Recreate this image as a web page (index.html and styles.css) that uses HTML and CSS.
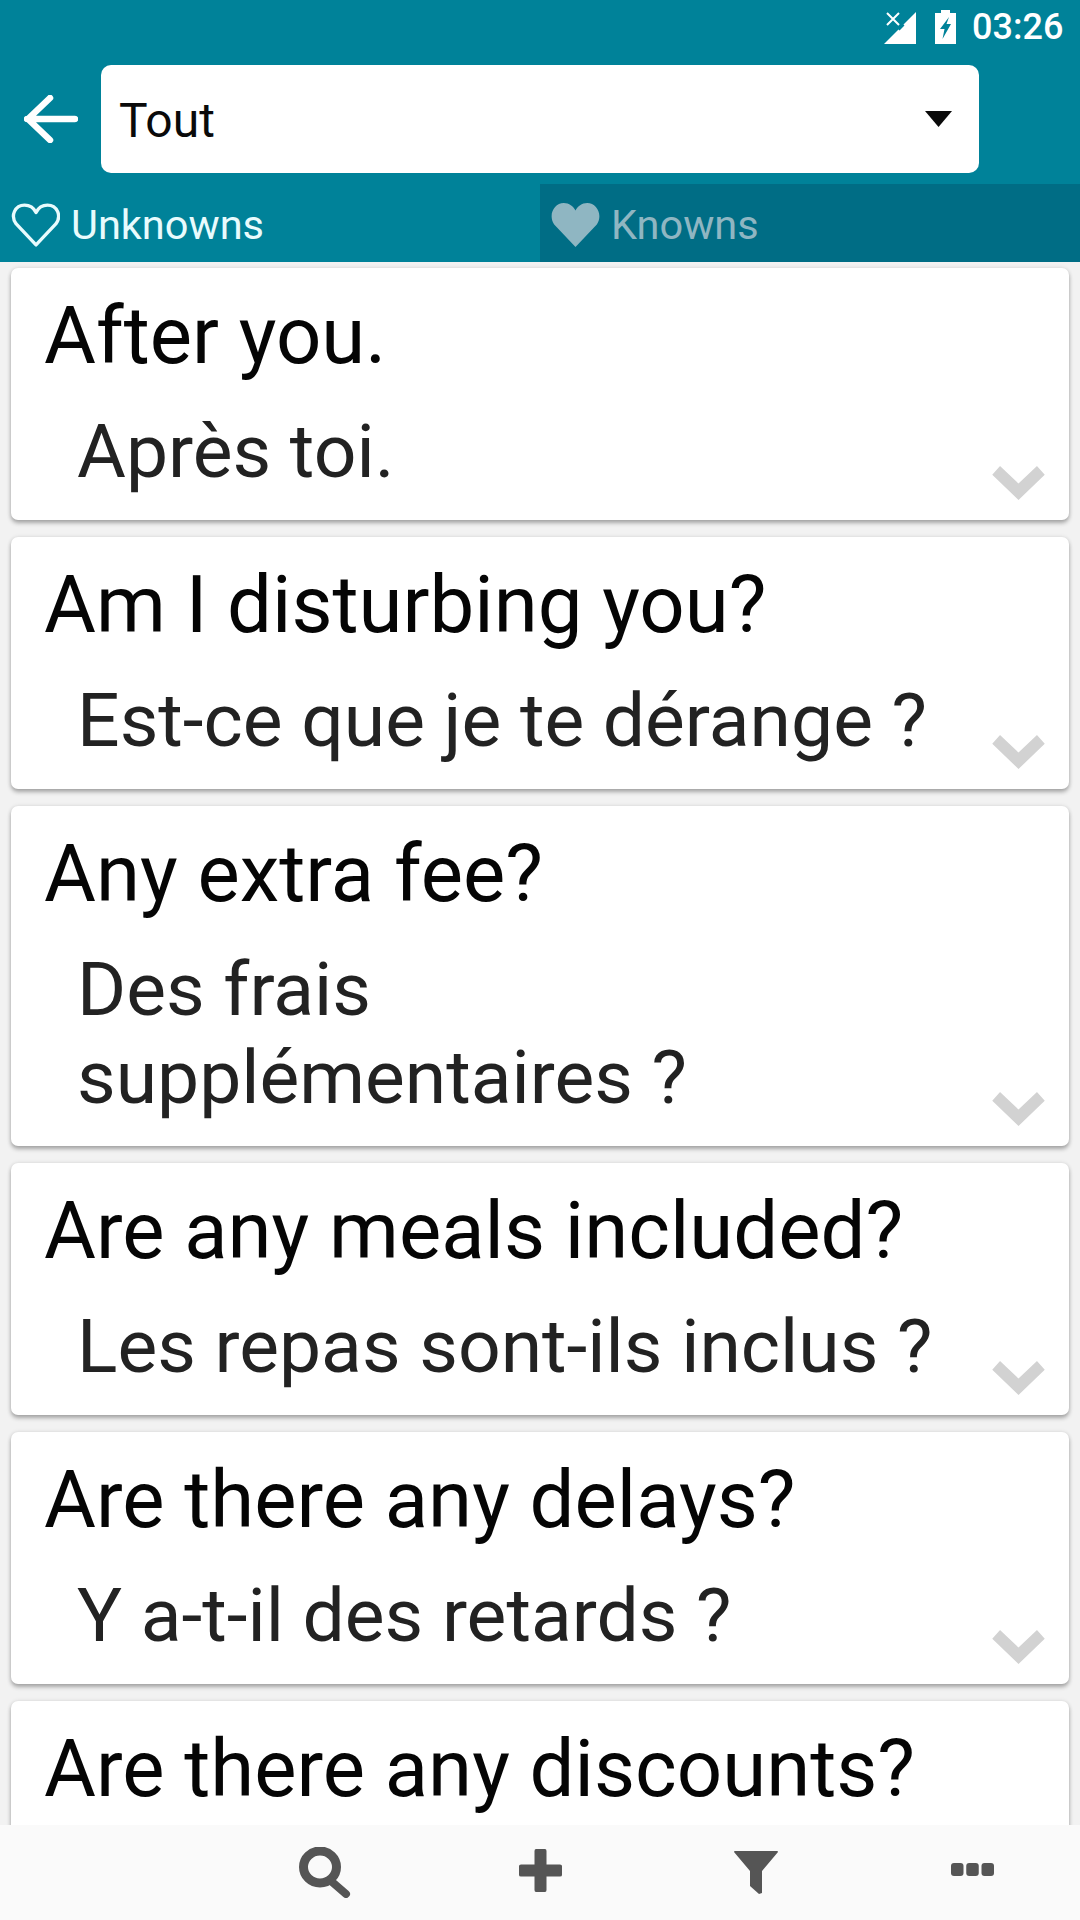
FILE: index.html
```html
<!DOCTYPE html>
<html lang="fr">
<head>
<meta charset="utf-8">
<title>Phrases</title>
<link rel="stylesheet" href="styles.css">
</head>
<body>
<div class="app">
  <header class="header">
    <div class="status">
      <svg class="ico-signal" viewBox="0 0 32 32"><path d="M32 0V32H0Z" fill="#fff"/><path d="M0 -2L18 16M18 -2L0 16" stroke="#008299" stroke-width="7"/><path d="M3 1L15 13M15 1L3 13" stroke="#fff" stroke-width="2"/></svg>
      <svg class="ico-batt" viewBox="0 0 21 34"><path d="M6 0H15V3H21V34H0V3H6Z" fill="#fff"/><path d="M14 7L5 19H9.5L7.5 29L16 14H11.5Z" fill="#008299"/></svg>
      <span class="clock">03:26</span>
    </div>
    <div class="toolbar">
      <svg class="ico-back" viewBox="0 0 54 48"><path d="M3 24H51M26 3L4 24L26 45" fill="none" stroke="#fff" stroke-width="6.5" stroke-linecap="round" stroke-linejoin="round"/></svg>
      <div class="select"><span>Tout</span><svg class="ico-caret" viewBox="0 0 27 16"><path d="M0 0H27L13.5 16Z" fill="#0a0a0a"/></svg></div>
    </div>
    <div class="tabs">
      <div class="tab"><svg class="ico-heart" viewBox="0 1 47 42" preserveAspectRatio="none"><path d="M24 41L5 21C-1 13 4 3 13 3C18 3 22 6 24 10C26 6 30 3 35 3C44 3 49 13 43 21Z" fill="none" stroke="#e8fbfd" stroke-width="3.2" stroke-linejoin="round"/></svg><span>Unknowns</span></div>
      <div class="tab tab-off"><svg class="ico-heart" viewBox="1 2 46 41" preserveAspectRatio="none"><path d="M24 43L4 22C-2 13 4 2 13 2C18 2 22 5 24 9C26 5 30 2 35 2C44 2 50 13 44 22Z" fill="#8fb6c2"/></svg><span>Knowns</span></div>
    </div>
  </header>
  <main class="list">
    <article class="card"><h2>After you.</h2><p>Après toi.</p><svg class="chev" viewBox="0 0 54 36"><path d="M0 9L8 0L27 18L46 0L54 9L27 35Z" fill="#d2d2d2"/></svg></article>
    <article class="card"><h2>Am I disturbing you?</h2><p>Est-ce que je te dérange ?</p><svg class="chev" viewBox="0 0 54 36"><path d="M0 9L8 0L27 18L46 0L54 9L27 35Z" fill="#d2d2d2"/></svg></article>
    <article class="card"><h2>Any extra fee?</h2><p>Des frais<br>supplémentaires ?</p><svg class="chev" viewBox="0 0 54 36"><path d="M0 9L8 0L27 18L46 0L54 9L27 35Z" fill="#d2d2d2"/></svg></article>
    <article class="card"><h2>Are any meals included?</h2><p>Les repas sont-ils inclus ?</p><svg class="chev" viewBox="0 0 54 36"><path d="M0 9L8 0L27 18L46 0L54 9L27 35Z" fill="#d2d2d2"/></svg></article>
    <article class="card"><h2>Are there any delays?</h2><p>Y a-t-il des retards ?</p><svg class="chev" viewBox="0 0 54 36"><path d="M0 9L8 0L27 18L46 0L54 9L27 35Z" fill="#d2d2d2"/></svg></article>
    <article class="card"><h2>Are there any discounts?</h2></article>
  </main>
  <nav class="bottom">
    <svg class="ico-search" viewBox="0 0 52 51"><ellipse cx="21" cy="20" rx="16.5" ry="16" fill="none" stroke="#555" stroke-width="9"/><path d="M32 34L47 47" stroke="#555" stroke-width="8" stroke-linecap="round"/></svg>
    <svg class="ico-plus" viewBox="0 0 43 43"><path d="M17 0H26Q27.500 0 27.500 2V15.500H41Q43 15.500 43 17V26Q43 27.500 41 27.500H27.500V41Q27.500 43 26 43H17Q15.500 43 15.500 41V27.500H2Q0 27.500 0 26V17Q0 15.500 2 15.500H15.500V2Q15.500 0 17 0Z" fill="#555"/></svg>
    <svg class="ico-filter" viewBox="0 0 44 44"><path d="M1 0H43Q44 0 44 1L28 20V42L25 43L16 35V20L0 1Q0 0 1 0Z" fill="#555"/></svg>
    <svg class="ico-more" viewBox="0 0 43 13"><rect x="0" width="12.500" height="13" rx="3" fill="#555"/><rect x="15.250" width="12.500" height="13" rx="3" fill="#555"/><rect x="30.500" width="12.500" height="13" rx="3" fill="#555"/></svg>
  </nav>
</div>
</body>
</html>
```
FILE: styles.css
```css
* { box-sizing: border-box; margin: 0; padding: 0; }
html, body { width: 1080px; height: 1920px; overflow: hidden; }
body { font-family: Roboto, "Liberation Sans", sans-serif; background: #f2f2f2; }
.app { width: 1080px; height: 1920px; display: flex; flex-direction: column; }
.header { background: #008299; height: 262px; flex: none; display: flex; flex-direction: column; }
.status { height: 65px; display: flex; align-items: flex-start; justify-content: flex-end; padding: 10px 20px 0 0; color: #fff; }
.ico-signal { width: 32px; height: 32px; margin: 2px 19px 0 0; }
.ico-batt { width: 21px; height: 34px; margin-right: 16px; }
.clock { font-size: 36px; font-weight: 500; line-height: 34px; width: 88px; }
.toolbar { height: 119px; display: flex; align-items: flex-start; }
.ico-back { width: 54px; height: 48px; margin: 30px 0 0 24px; }
.select { width: 878px; height: 108px; margin-left: 23px; background: #fff; border-radius: 10px; display: flex; align-items: center; justify-content: space-between; padding: 2px 27px 0 18px; font-size: 48px; color: #0a0a0a; }
.ico-caret { width: 27px; height: 16px; margin-top: -2px; }
.tabs { flex: 1; display: flex; }
.tab { width: 540px; display: flex; align-items: center; padding: 3px 0 0 11px; color: #e8fbfd; font-size: 41.500px; }
.tab span { margin-left: 11px; }
.tab-off { background: #006d85; color: #8fb6c2; }
.ico-heart { width: 49px; height: 44px; }
.list { flex: 1; min-height: 0; overflow: hidden; padding: 6px 11px 0; display: flex; flex-direction: column; gap: 17px; }
.card { position: relative; flex: none; background: #fff; border-radius: 7px; box-shadow: 0 3px 4px rgba(0,0,0,.3), 0 0 4px rgba(0,0,0,.1); padding: 18px 33px 25px; }
.card h2 { font-size: 79.700px; font-weight: 400; line-height: 100px; color: #050505; white-space: nowrap; }
.card p { font-size: 75px; line-height: 88px; color: #222; padding: 21px 0 0 33px; }
.chev { position: absolute; right: 24px; bottom: 19px; width: 53px; height: 35px; }
.bottom { height: 95px; flex: none; background: #fafafa; display: grid; grid-template-columns: repeat(5, 216px); align-items: center; justify-items: center; }
.bottom svg:first-child { grid-column: 2; }
.ico-search { width: 52px; height: 51px; margin-left: 2px; }
.ico-plus { width: 43px; height: 43px; margin-bottom: 4px; }
.ico-filter { width: 44px; height: 44px; }
.ico-more { width: 43px; height: 13px; margin-bottom: 6px; }
```
